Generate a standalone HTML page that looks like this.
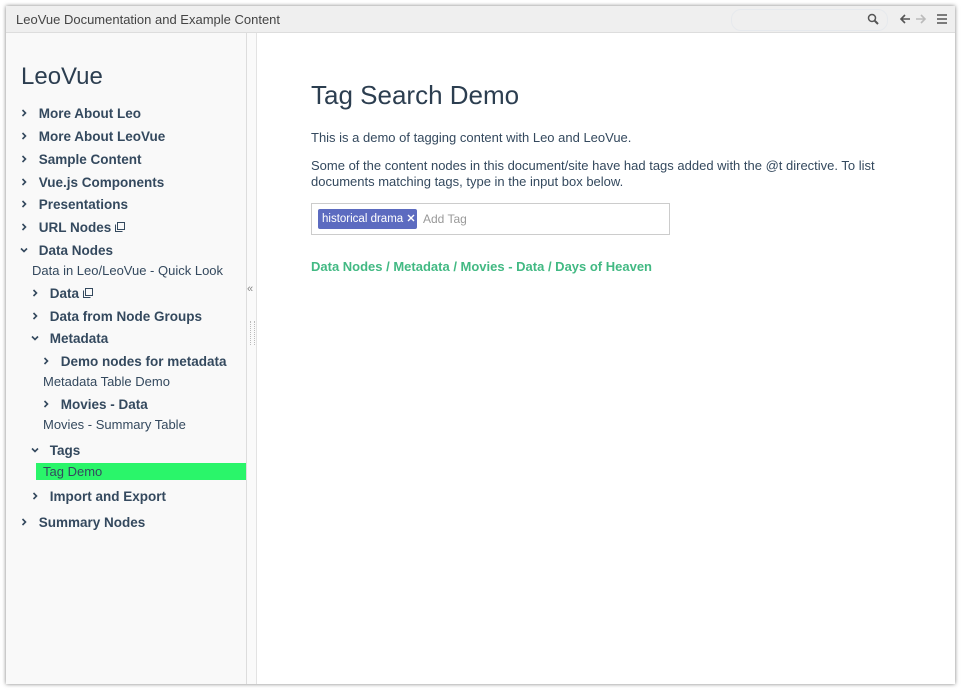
<!DOCTYPE html>
<html><head><style>
body{margin:0;width:961px;height:690px;background:#fff;position:relative;overflow:hidden;font-family:"Liberation Sans",sans-serif;color:#2c3e50}
.win{position:absolute;left:6px;top:6px;width:949px;height:678px;background:#fff;box-shadow:0 0 4px rgba(0,0,0,.5)}
.bar{position:absolute;left:0;top:0;width:949px;height:26px;background:#efefef;border-bottom:1px solid #ddd}
.bar .t{position:absolute;left:10px;top:6px;font-size:13px;color:#444}
.side{position:absolute;left:0;top:27px;width:240px;height:651px;background:#f9f9f9;border-right:1px solid #ddd}
.gut{position:absolute;left:241px;top:27px;width:9px;height:651px;background:#fafafa;border-right:1px solid #e3e3e3}
.i{position:absolute;font-size:13.5px;font-weight:bold;color:#34495e;white-space:nowrap}
.l{position:absolute;font-size:13px;color:#34495e;white-space:nowrap}
.c{display:inline-block;width:16px;vertical-align:middle}
.c svg{display:block;margin-top:-2px}
</style></head><body>
<svg width="0" height="0" style="position:absolute"><defs>
<symbol id="r" viewBox="0 0 10 10"><path d="M3.5 2 L6.5 5 L3.5 8" fill="none" stroke="#34495e" stroke-width="1.6"/></symbol>
<symbol id="d" viewBox="0 0 10 10"><path d="M2 3.5 L5 6.5 L8 3.5" fill="none" stroke="#34495e" stroke-width="1.6"/></symbol>
</defs></svg>
<div class="win">
<div class="bar"><div class="t">LeoVue Documentation and Example Content</div>
<div style="position:absolute;left:725px;top:3px;width:155px;height:20px;border-radius:10px;border:1px solid #e6e9ed"></div>
<svg style="position:absolute;left:861px;top:7px" width="12" height="12"><circle cx="5" cy="5" r="3.5" fill="none" stroke="#555" stroke-width="1.5"/><line x1="7.5" y1="7.5" x2="11" y2="11" stroke="#555" stroke-width="2"/></svg>
<svg style="position:absolute;left:893px;top:7px" width="12" height="12"><path d="M11 6H2M6 2L2 6L6 10" fill="none" stroke="#555" stroke-width="1.6"/></svg>
<svg style="position:absolute;left:909px;top:7px" width="12" height="12"><path d="M1 6H10M6 2L10 6L6 10" fill="none" stroke="#bbb" stroke-width="1.6"/></svg>
<svg style="position:absolute;left:930px;top:7px" width="12" height="12"><path d="M1 2H11M1 6H11M1 10H11" stroke="#555" stroke-width="1.6"/></svg>
</div>
<div class="side">
<div style="position:absolute;left:15px;top:30px;font-size:24px;color:#2c3e50">LeoVue</div>
<div class="i" style="left:13px;top:73px"><span class="c"><svg width="10" height="10"><use href="#r"/></svg></span> More About Leo</div>
<div class="i" style="left:13px;top:96px"><span class="c"><svg width="10" height="10"><use href="#r"/></svg></span> More About LeoVue</div>
<div class="i" style="left:13px;top:119px"><span class="c"><svg width="10" height="10"><use href="#r"/></svg></span> Sample Content</div>
<div class="i" style="left:13px;top:142px"><span class="c"><svg width="10" height="10"><use href="#r"/></svg></span> Vue.js Components</div>
<div class="i" style="left:13px;top:164px"><span class="c"><svg width="10" height="10"><use href="#r"/></svg></span> Presentations</div>
<div class="i" style="left:13px;top:187px"><span class="c"><svg width="10" height="10"><use href="#r"/></svg></span> URL Nodes <svg width="10" height="10"><rect x="2.5" y="0.5" width="7" height="7" fill="none" stroke="#34495e"/><path d="M0.5 2.5V9.5H7.5" fill="none" stroke="#34495e"/></svg></div>
<div class="i" style="left:13px;top:210px"><span class="c"><svg width="10" height="10"><use href="#d"/></svg></span> Data Nodes</div>
<div class="l" style="left:26px;top:230px">Data in Leo/LeoVue - Quick Look</div>
<div class="i" style="left:24px;top:253px"><span class="c"><svg width="10" height="10"><use href="#r"/></svg></span> Data <svg width="10" height="10"><rect x="2.5" y="0.5" width="7" height="7" fill="none" stroke="#34495e"/><path d="M0.5 2.5V9.5H7.5" fill="none" stroke="#34495e"/></svg></div>
<div class="i" style="left:24px;top:276px"><span class="c"><svg width="10" height="10"><use href="#r"/></svg></span> Data from Node Groups</div>
<div class="i" style="left:24px;top:298px"><span class="c"><svg width="10" height="10"><use href="#d"/></svg></span> Metadata</div>
<div class="i" style="left:35px;top:321px"><span class="c"><svg width="10" height="10"><use href="#r"/></svg></span> Demo nodes for metadata</div>
<div class="l" style="left:37px;top:341px">Metadata Table Demo</div>
<div class="i" style="left:35px;top:364px"><span class="c"><svg width="10" height="10"><use href="#r"/></svg></span> Movies - Data</div>
<div class="l" style="left:37px;top:384px">Movies - Summary Table</div>
<div class="i" style="left:24px;top:410px"><span class="c"><svg width="10" height="10"><use href="#d"/></svg></span> Tags</div>
<div style="position:absolute;left:30px;top:430px;width:210px;height:17px;background:#2af56a"></div>
<div class="l" style="left:37px;top:431px">Tag Demo</div>
<div class="i" style="left:24px;top:456px"><span class="c"><svg width="10" height="10"><use href="#r"/></svg></span> Import and Export</div>
<div class="i" style="left:13px;top:482px"><span class="c"><svg width="10" height="10"><use href="#r"/></svg></span> Summary Nodes</div>
</div>
<div class="gut"><div style="position:absolute;left:0;top:250px;font-size:11px;color:#888">«</div>
<div style="position:absolute;left:3px;top:288px;width:3px;height:24px;border-left:1px dotted #bbb;border-right:1px dotted #bbb"></div></div>
<div style="position:absolute;left:305px;top:74px;font-size:26px;color:#2c3e50">Tag Search Demo</div>
<div style="position:absolute;left:305px;top:124px;font-size:13px;color:#34495e">This is a demo of tagging content with Leo and LeoVue.</div>
<div style="position:absolute;left:305px;top:152px;width:580px;font-size:13px;line-height:16px;color:#34495e">Some of the content nodes in this document/site have had tags added with the @t directive. To list documents matching tags, type in the input box below.</div>
<div style="position:absolute;left:305px;top:197px;width:357px;height:30px;border:1px solid #ccc">
<div style="position:absolute;left:6px;top:5px;height:20px;width:95px;background:#5c6bc0;border-radius:2px;color:#fff;font-size:11.5px;line-height:20px;padding-left:4px;white-space:nowrap">historical drama <svg width="8" height="8" style="margin-left:1px"><path d="M1 1L7 7M7 1L1 7" stroke="#fff" stroke-width="1.4"/></svg></div>
<div style="position:absolute;left:111px;top:8px;font-size:12px;color:#999">Add Tag</div></div>
<div style="position:absolute;left:305px;top:253px;font-size:13px;font-weight:bold;color:#42b983">Data Nodes / Metadata / Movies - Data / Days of Heaven</div>
</div>
</body></html>
